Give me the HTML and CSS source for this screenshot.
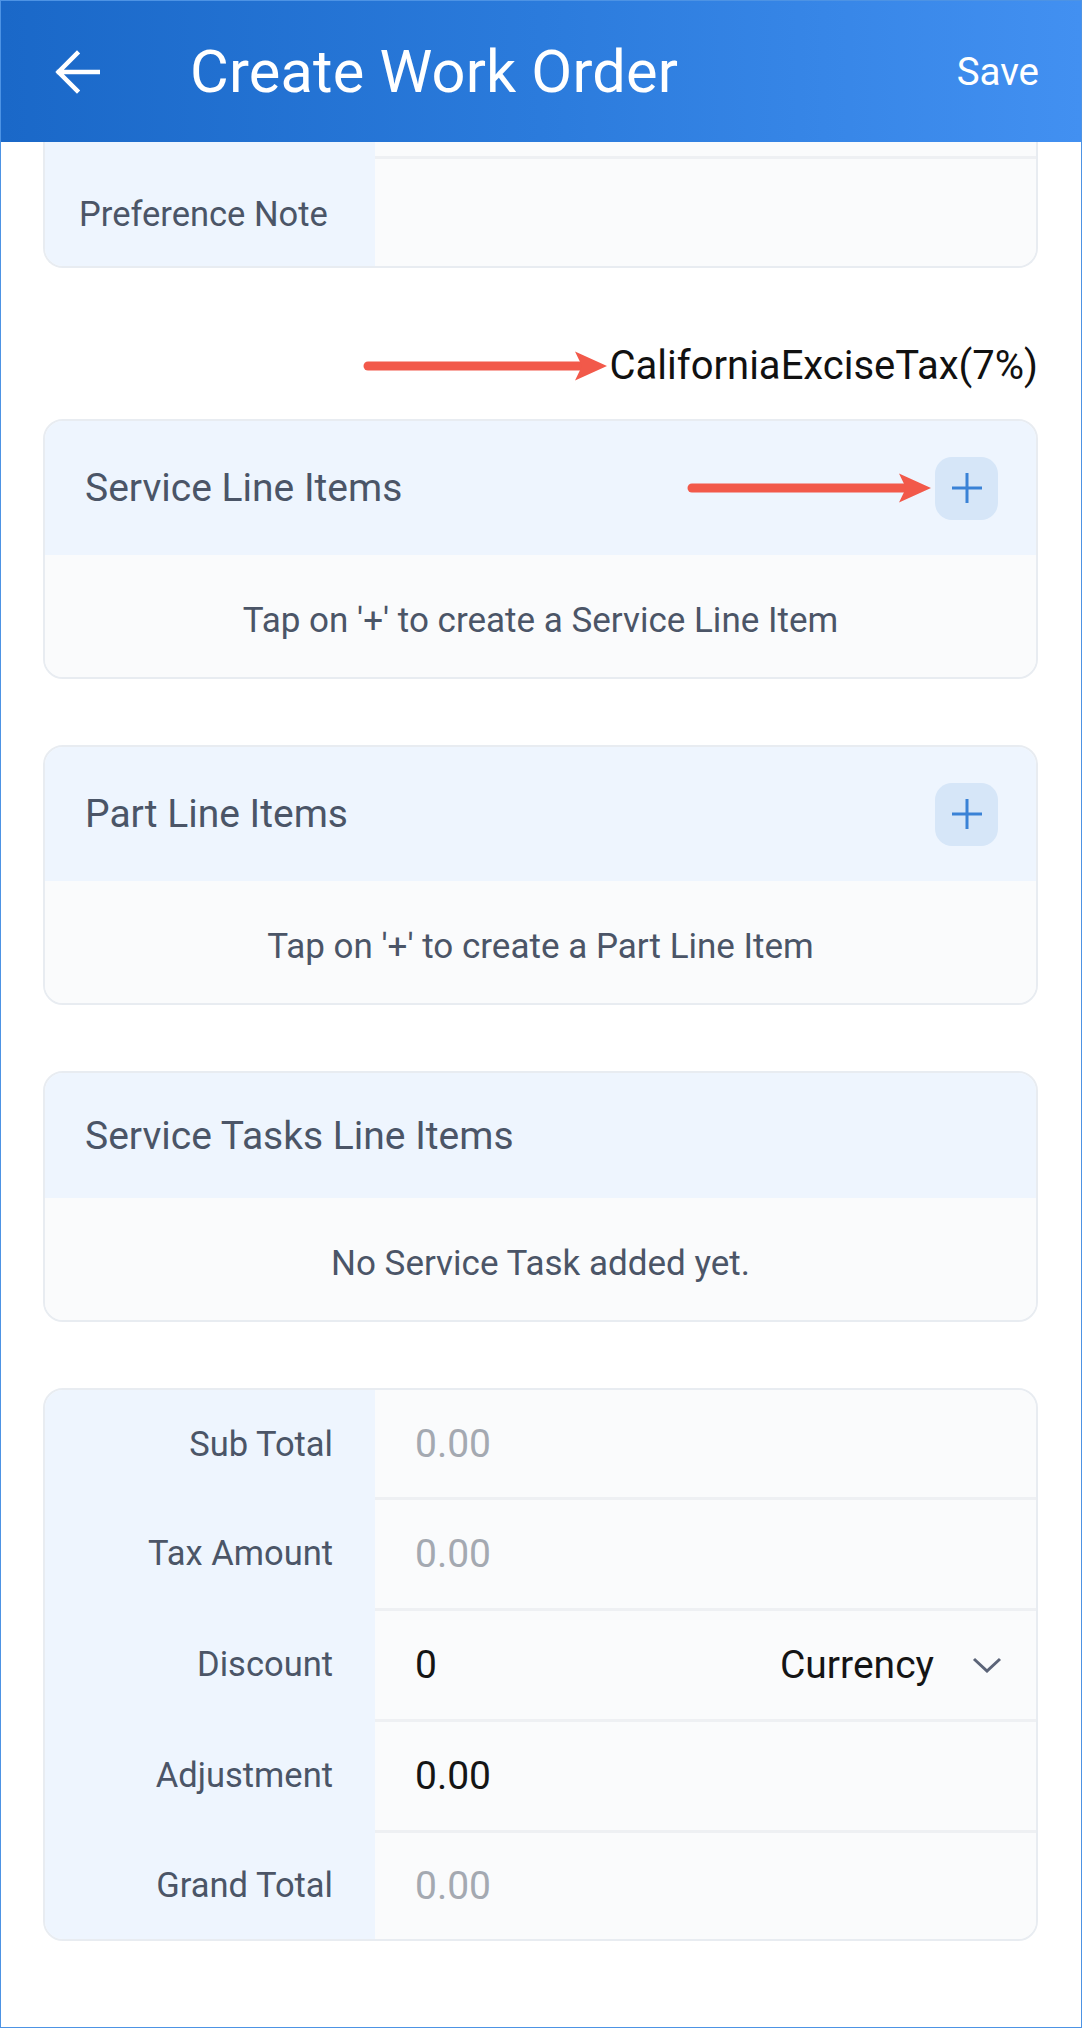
FILE: index.html
```html
<!DOCTYPE html>
<html lang="en">
<head>
<meta charset="utf-8">
<title>Create Work Order</title>
<link rel="stylesheet" href="styles.css">
</head>
<body>
<div class="frame">
  <header class="appbar">
    <span class="back" aria-label="Back">
      <svg width="48" height="46" viewBox="0 0 48 46"><path d="M46 23H7 M25 4.5 6.5 23 25 41.5" fill="none" stroke="#fff" stroke-width="4.5" stroke-linecap="square"/></svg>
    </span>
    <h1 class="title">Create Work Order</h1>
    <span class="save">Save</span>
  </header>

  <main class="content">
    <section class="card card-clipped">
      <div class="kv-row kv-partial"><div class="kv-label"></div><div class="kv-value"></div></div>
      <div class="kv-row kv-sep kv-note"><div class="kv-label kv-left">Preference Note</div><div class="kv-value"></div></div>
    </section>

    <div class="tax-row">
      <svg class="pointer" width="245" height="30" viewBox="0 0 245 30"><path d="M5 15H222" stroke="#f2594a" stroke-width="9" stroke-linecap="round"/><path d="M212 0.5 244 15 212 29.5 219 15Z" fill="#f2594a"/></svg>
      <span class="tax-text">CaliforniaExciseTax(7%)</span>
    </div>

    <section class="card">
      <div class="card-head">
        <span class="card-title">Service Line Items</span>
        <div class="head-actions">
          <svg class="pointer" width="245" height="30" viewBox="0 0 245 30"><path d="M5 15H222" stroke="#f2594a" stroke-width="9" stroke-linecap="round"/><path d="M212 0.5 244 15 212 29.5 219 15Z" fill="#f2594a"/></svg>
          <span class="add"><svg width="32" height="32" viewBox="0 0 32 32"><path d="M16 1V31M1 16H31" stroke="#3a82d6" stroke-width="3"/></svg></span>
        </div>
      </div>
      <div class="card-body">Tap on '+' to create a Service Line Item</div>
    </section>

    <section class="card">
      <div class="card-head">
        <span class="card-title">Part Line Items</span>
        <div class="head-actions">
          <span class="add"><svg width="32" height="32" viewBox="0 0 32 32"><path d="M16 1V31M1 16H31" stroke="#3a82d6" stroke-width="3"/></svg></span>
        </div>
      </div>
      <div class="card-body">Tap on '+' to create a Part Line Item</div>
    </section>

    <section class="card">
      <div class="card-head card-head-plain">
        <span class="card-title">Service Tasks Line Items</span>
      </div>
      <div class="card-body">No Service Task added yet.</div>
    </section>

    <section class="card totals">
      <div class="kv-row kv-first"><div class="kv-label">Sub Total</div><div class="kv-value placeholder">0.00</div></div>
      <div class="kv-row kv-sep"><div class="kv-label">Tax Amount</div><div class="kv-value placeholder">0.00</div></div>
      <div class="kv-row kv-sep"><div class="kv-label">Discount</div><div class="kv-value filled"><span>0</span><span class="select">Currency<svg width="30" height="16" viewBox="0 0 30 16"><path d="M2 2 15 14 28 2" fill="none" stroke="#5b6478" stroke-width="3"/></svg></span></div></div>
      <div class="kv-row kv-sep"><div class="kv-label">Adjustment</div><div class="kv-value filled">0.00</div></div>
      <div class="kv-row kv-sep kv-last"><div class="kv-label">Grand Total</div><div class="kv-value placeholder">0.00</div></div>
    </section>
  </main>
</div>
</body>
</html>
```

FILE: styles.css
```css
* { box-sizing: border-box; }

html, body {
  margin: 0;
  padding: 0;
  background: #ffffff;
}

body {
  font-family: Roboto, "Noto Sans", "Liberation Sans", sans-serif;
}

.frame {
  width: 1082px;
  height: 2028px;
  border: 1px solid #4d93e4;
  background: #ffffff;
  overflow: hidden;
}

.appbar {
  height: 141px;
  display: flex;
  align-items: center;
  padding: 0 42px 0 42px;
  background: linear-gradient(90deg, #1a68c8 0%, #2b7bdc 50%, #4290f1 100%);
  color: #ffffff;
}

.back {
  display: flex;
  width: 48px;
  height: 46px;
  margin-left: 9px;
}

.title {
  margin: 0 0 0 90px;
  font-size: 59.5px;
  font-weight: 400;
  line-height: 70px;
  letter-spacing: 0.2px;
  flex: 1;
}

.save {
  font-size: 38.5px;
  line-height: 48px;
  font-weight: 400;
}

.content {
  padding: 0 43px 0 42px;
}

.card {
  border: 2px solid #e8ecf1;
  border-radius: 20px;
  overflow: hidden;
  margin-top: 66px;
  background: #fafbfc;
}

.card-clipped {
  margin-top: 0;
  border-top: none;
  border-radius: 0 0 20px 20px;
}

.kv-row {
  display: grid;
  grid-template-columns: 330px 1fr;
}

.kv-label {
  background: #eef5fe;
  color: #4b5567;
  font-size: 34.5px;
  display: flex;
  align-items: center;
  justify-content: flex-end;
  padding-right: 42px;
}

.kv-left {
  justify-content: flex-start;
  padding: 6px 0 0 34px;
}

.kv-value {
  background: #fafbfc;
  display: flex;
  align-items: center;
  padding: 0 34px 0 40px;
  font-size: 39px;
}

.kv-partial { height: 14px; }

.kv-sep { height: 111px; }
.kv-sep .kv-value { border-top: 3px solid #eef0f3; }

.kv-note { height: 110px; }

.kv-first { height: 107px; }
.kv-last { height: 109px; }

.placeholder { color: #a4a9b1; }
.filled { color: #151515; }

.select {
  margin-left: auto;
  display: flex;
  align-items: center;
  gap: 38px;
}

.tax-row {
  margin-top: 74px;
  height: 48px;
  display: flex;
  align-items: center;
  justify-content: flex-end;
  gap: 2px;
}

.tax-row + .card { margin-top: 29px; }

.pointer { display: block; }

.tax-text {
  font-size: 40px;
  line-height: 48px;
  color: #111111;
}

.card-head {
  height: 134px;
  background: #eef5fe;
  display: flex;
  align-items: center;
  padding: 0 38px 0 40px;
}

.card-head-plain { height: 125px; }

.card-title {
  font-size: 39px;
  color: #4b5567;
  line-height: 50px;
}

.head-actions {
  margin-left: auto;
  display: flex;
  align-items: center;
  gap: 3px;
}

.add {
  width: 63px;
  height: 63px;
  border-radius: 17px;
  background: #d6e6f8;
  display: flex;
  align-items: center;
  justify-content: center;
}

.card-body {
  height: 122px;
  display: flex;
  align-items: center;
  justify-content: center;
  padding-top: 8px;
  font-size: 35px;
  color: #4b5567;
  background: #fafbfc;
}
```
